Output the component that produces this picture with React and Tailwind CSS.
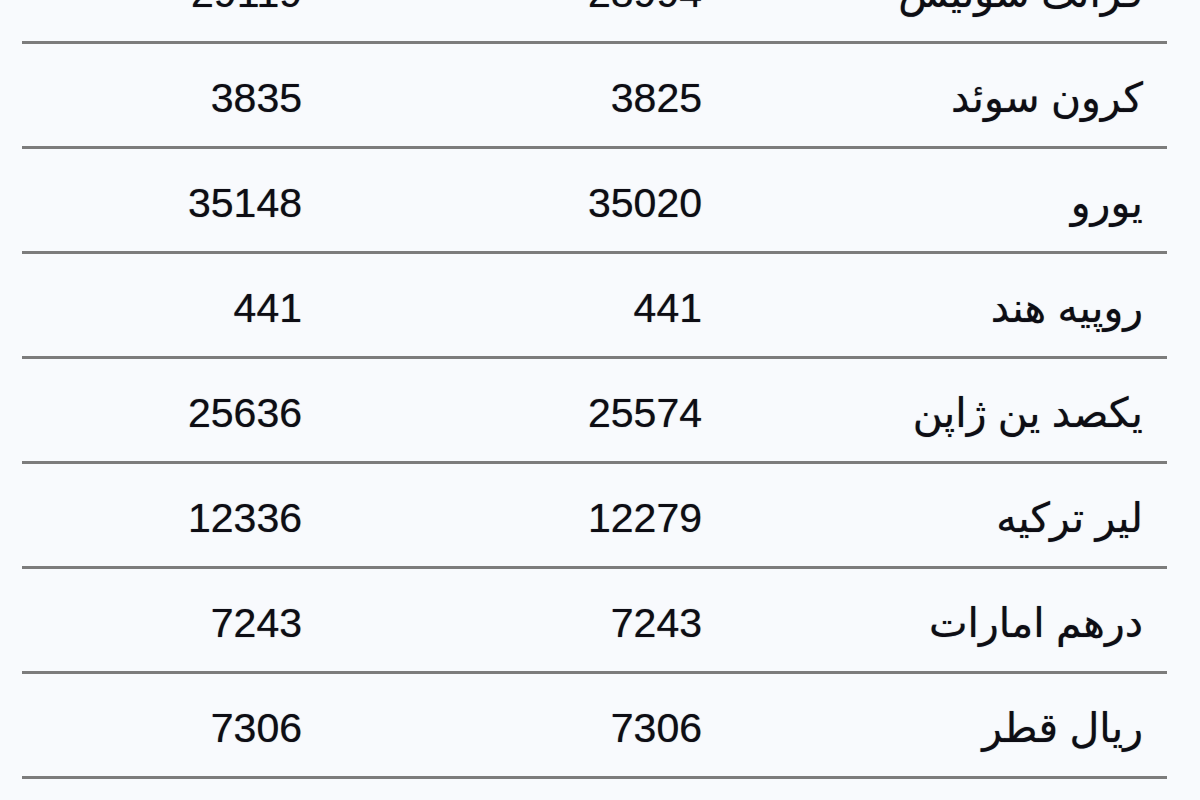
import React from "react";

const rates = [
  { name: "فرانک سوئیس", buy: "28994", sell: "29119" },
  { name: "کرون سوئد", buy: "3825", sell: "3835" },
  { name: "یورو", buy: "35020", sell: "35148" },
  { name: "روپیه هند", buy: "441", sell: "441" },
  { name: "یکصد ین ژاپن", buy: "25574", sell: "25636" },
  { name: "لیر ترکیه", buy: "12279", sell: "12336" },
  { name: "درهم امارات", buy: "7243", sell: "7243" },
  { name: "ریال قطر", buy: "7306", sell: "7306" },
  { name: "ریال عمان", buy: "97620", sell: "98010" },
];

const App = () => {
  return (
    <div
      className="h-[800px] w-full overflow-hidden bg-[#f8fafd] text-[#0d0d14] [text-shadow:0_0_1px_rgba(0,0,0,0.55)]"
      style={{ fontFamily: '"Liberation Sans", "DejaVu Sans", sans-serif' }}
    >
      <div className="ml-[22px] mr-[33px] mt-[-61px]">
        {rates.map((rate) => (
          <div
            key={rate.name}
            className="grid h-[105px] grid-cols-[280px_400px_1fr] items-center border-b-[3px] border-[#7c7c7c] pr-[24px] pt-[6px] text-[41px] leading-none"
          >
            <div className="text-right">{rate.sell}</div>
            <div className="text-right">{rate.buy}</div>
            <div className="text-right" dir="rtl">
              {rate.name}
            </div>
          </div>
        ))}
      </div>
    </div>
  );
};

export default App;
